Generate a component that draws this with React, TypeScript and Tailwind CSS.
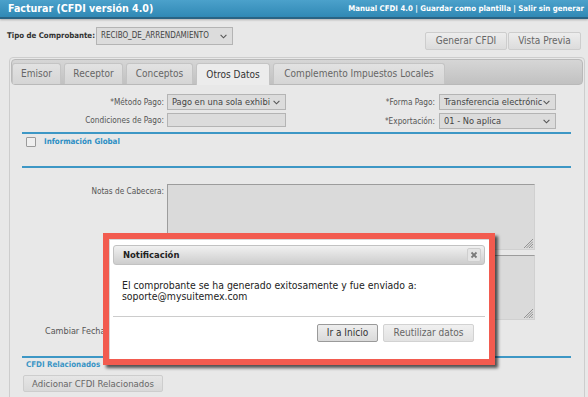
import type { ReactNode } from "react";

// pantalla "Facturar" con el aviso de comprobante generado encima
function Chevron() {
  return (
    <svg width="7" height="5" viewBox="0 0 7 5" className="shrink-0">
      <path d="M0.6 0.9 L3.5 3.8 L6.4 0.9" fill="none" stroke="#555" strokeWidth="1.1" />
    </svg>
  );
}

function Grip() {
  return (
    <svg width="9" height="9" viewBox="0 0 9 9" className="absolute right-[1px] bottom-[1px]">
      <path d="M9 0L0 9M9 2.5L2.5 9M9 5L5 9M9 7.5L7.5 9" stroke="#8a8a8a" strokeWidth="0.9" />
    </svg>
  );
}

function Select({ text, className }: { text: string; className: string }) {
  return (
    <div
      className={`flex items-center justify-between border border-[#b4b4b4] bg-[#dcdcdc] pl-[4px] pr-[5px] text-[#444] ${className}`}
    >
      <span className="whitespace-nowrap overflow-hidden leading-[12px]">{text}</span>
      <Chevron />
    </div>
  );
}

function Label({ children, w }: { children?: ReactNode; w: string }) {
  return <div className={`${w} shrink-0 text-right text-[8.2px] leading-none text-[#555]`}>{children}</div>;
}

function TextArea({ className }: { className: string }) {
  return (
    <div
      className={`relative border border-t-[#9c9c9c] border-l-[#9c9c9c] border-r-[#d0d0d0] border-b-[#d0d0d0] bg-[#dadada] ${className}`}
    >
      <Grip />
    </div>
  );
}

function BlueLine({ className = "" }: { className?: string }) {
  return <div className={`ml-[11px] w-[549px] h-[2px] bg-[#3d97c5] ${className}`} />;
}

const tabs = [
  { name: "Emisor", w: "w-[49px]" },
  { name: "Receptor", w: "w-[59px]" },
  { name: "Conceptos", w: "w-[67px]" },
  { name: "Otros Datos", w: "w-[74px]", active: true },
  { name: "Complemento Impuestos Locales", w: "w-[172px]" },
];

export default function App() {
  return (
    <div className="relative w-[588px] h-[397px] overflow-hidden bg-[#e8e8e8] font-['DejaVu_Sans_Condensed','Liberation_Sans',sans-serif] text-[#555]">
      {/* Encabezado */}
      <div className="h-[19px] flex items-center justify-between pl-[8px] pr-[4px] bg-gradient-to-b from-[#4ba1cb] to-[#3089b5] border-b-2 border-[#2a6383] shadow-[0_1px_2px_rgba(0,0,0,0.25)]">
        <span className="text-white font-bold text-[10.6px] leading-none">Facturar (CFDI versión 4.0)</span>
        <span className="text-white font-bold text-[7.8px] leading-none">
          Manual CFDI 4.0 | Guardar como plantilla | Salir sin generar
        </span>
      </div>

      {/* Tipo de comprobante + acciones */}
      <div className="flex items-start pl-[7px] pr-[7px] mt-[8px]">
        <div className="flex items-center h-[18px]">
          <span className="font-bold text-[7.8px] text-[#333] leading-none mr-[1px]">Tipo de Comprobante:</span>
          <Select text="RECIBO_DE_ARRENDAMIENTO" className="w-[137px] h-[18px] text-[8px]" />
        </div>
        <div className="ml-auto mt-[5px] flex gap-[1px]">
          <button className="w-[82px] h-[18px] border border-[#cdcdcd] rounded-[2px] bg-gradient-to-b from-[#ededed] to-[#dcdcdc] text-[10px] text-[#666] leading-none">
            Generar CFDI
          </button>
          <button className="w-[73px] h-[18px] border border-[#cdcdcd] rounded-[2px] bg-gradient-to-b from-[#ededed] to-[#dcdcdc] text-[10px] text-[#666] leading-none">
            Vista Previa
          </button>
        </div>
      </div>

      {/* Pestañas */}
      <div className="ml-[9px] mr-[3px] mt-[7px] h-[400px] border border-[#cdcdcd] rounded-[4px] p-[1px]">
        <div className="h-[26px] border border-[#b9b9b9] rounded-[4px] bg-gradient-to-b from-[#d6d6d6] to-[#c1c1c1] flex items-end gap-[3px]">
          {tabs.map((t) =>
            t.active ? (
              <div
                key={t.name}
                className={`${t.w} h-[22px] -mb-[1px] flex items-center justify-center border border-b-0 border-[#c4c4c4] rounded-t-[3px] bg-[#ececec] text-[10px] text-[#333] leading-none`}
              >
                {t.name}
              </div>
            ) : (
              <div
                key={t.name}
                className={`${t.w} h-[21px] flex items-center justify-center border border-b-0 border-[#c4c4c4] rounded-t-[3px] bg-gradient-to-b from-[#e2e2e2] to-[#d5d5d5] text-[10px] text-[#666] leading-none`}
              >
                {t.name}
              </div>
            ),
          )}
        </div>

        {/* Otros datos */}
        <div className="flex items-center mt-[9px]">
          <Label w="w-[153px]">*Método Pago:</Label>
          <Select text="Pago en una sola exhibi" className="ml-[3px] w-[119px] h-[16px] text-[9.2px]" />
          <Label w="w-[149px]">*Forma Pago:</Label>
          <Select text="Transferencia electrónic" className="ml-[4px] w-[117px] h-[16px] text-[9.2px]" />
        </div>
        <div className="flex items-start mt-[3px]">
          <div className="h-[14px] flex items-center">
            <Label w="w-[153px]">Condiciones de Pago:</Label>
          </div>
          <div className="ml-[3px] w-[119px] h-[14px] border border-[#b4b4b4] bg-[#dcdcdc]" />
          <div className="h-[16px] flex items-center">
            <Label w="w-[149px]">*Exportación:</Label>
          </div>
          <Select text="01 - No aplica" className="ml-[4px] w-[117px] h-[16px] text-[9.2px]" />
        </div>

        <BlueLine className="mt-[3px]" />
        <div className="flex items-center ml-[15px] mt-[3px] h-[10px]">
          <div className="w-[10px] h-[10px] border border-[#9a9a9a] bg-[#efefef] rounded-[1px]" />
          <span className="ml-[8px] font-bold text-[7.9px] text-[#2e8fc4] leading-none">Información Global</span>
        </div>
        <BlueLine className="mt-[19px]" />

        <div className="flex items-start mt-[16px]">
          <div className="pt-[3px]">
            <Label w="w-[153px]">Notas de Cabecera:</Label>
          </div>
          <TextArea className="ml-[3px] w-[368px] h-[66px]" />
        </div>
        <div className="flex items-start mt-[5px]">
          <Label w="w-[153px]" />
          <TextArea className="ml-[3px] w-[368px] h-[65px]" />
        </div>
        <div className="flex items-center mt-[4px] h-[14px] pl-[34px]">
          <span className="text-[9px] leading-none text-[#555]">Cambiar Fecha de Emisión:</span>
        </div>

        <BlueLine className="mt-[18px]" />
        <div className="ml-[15px] mt-[2px] h-[10px] flex items-center">
          <span className="font-bold text-[7.9px] text-[#3a95c5] leading-none">CFDI Relacionados</span>
        </div>
        <button className="ml-[12px] mt-[4px] w-[140px] h-[17px] border border-[#cdcdcd] rounded-[2px] bg-gradient-to-b from-[#e6e6e6] to-[#d9d9d9] text-[9.5px] text-[#666] leading-none">
          Adicionar CFDI Relacionados
        </button>
        <BlueLine className="mt-[3px]" />
      </div>

      {/* Notificación (resaltada en rojo) */}
      <div className="absolute left-[103px] top-[233px] w-[392px] h-[132px] border-[6px] border-[#f25b4f] shadow-[3px_3px_3px_rgba(0,0,0,0.65),inset_2px_2px_2px_rgba(0,0,0,0.75)]">
        <div className="w-full h-full bg-white border-t border-l border-[#d6d6d6] pl-[3px] pr-[4px] flex flex-col">
          <div className="relative mt-[5px] h-[20px] flex items-center border border-[#c2c2c2] rounded-[3px] bg-gradient-to-b from-[#f1f1f1] to-[#cdcdcd] pl-[9px]">
            <span className="font-bold text-[9.4px] text-[#222] leading-none">Notificación</span>
            <div className="absolute right-[3px] top-[2px] w-[14px] h-[14px] flex items-center justify-center border border-[#cfcfcf] rounded-[2px] bg-[#e4e4e4]">
              <svg width="8" height="8" viewBox="0 0 8 8">
                <path d="M1.5 1.5 L6.5 6.5 M6.5 1.5 L1.5 6.5" stroke="#7a7a7a" strokeWidth="1.8" />
              </svg>
            </div>
          </div>
          <div className="mt-[15px] pl-[9px] text-[10.4px] leading-[10.5px] text-[#222]">
            El comprobante se ha generado exitosamente y fue enviado a:
            <br />
            soporte@mysuitemex.com
          </div>
          <div className="mt-[15px] h-px bg-[#cccccc]" />
          <div className="mt-[7px] flex justify-end gap-[5px] pr-[11px]">
            <button className="w-[61px] h-[18px] border border-[#9a9a9a] rounded-[2px] bg-gradient-to-b from-[#eeeeee] to-[#dadada] text-[10px] text-[#333] leading-none">
              Ir a Inicio
            </button>
            <button className="w-[91px] h-[18px] border border-[#d2d2d2] rounded-[2px] bg-gradient-to-b from-[#f0f0f0] to-[#e2e2e2] text-[10px] text-[#666] leading-none">
              Reutilizar datos
            </button>
          </div>
        </div>
      </div>
    </div>
  );
}
